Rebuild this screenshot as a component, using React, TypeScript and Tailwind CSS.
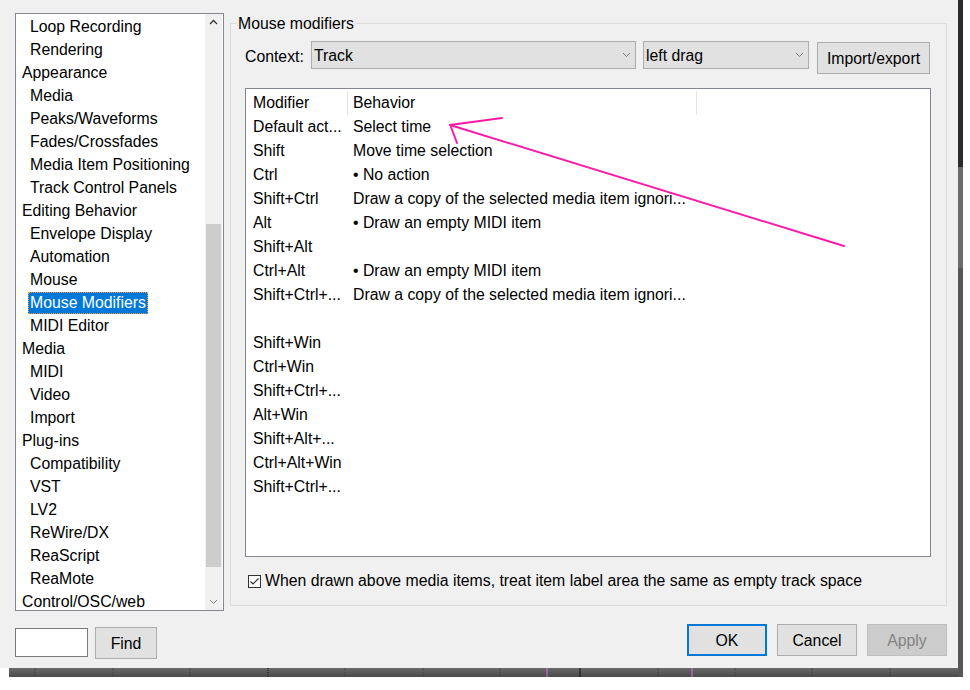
import React from 'react';

const treeItems: [string, boolean][] = [
  ['Loop Recording', true],
  ['Rendering', true],
  ['Appearance', false],
  ['Media', true],
  ['Peaks/Waveforms', true],
  ['Fades/Crossfades', true],
  ['Media Item Positioning', true],
  ['Track Control Panels', true],
  ['Editing Behavior', false],
  ['Envelope Display', true],
  ['Automation', true],
  ['Mouse', true],
  ['Mouse Modifiers', true],
  ['MIDI Editor', true],
  ['Media', false],
  ['MIDI', true],
  ['Video', true],
  ['Import', true],
  ['Plug-ins', false],
  ['Compatibility', true],
  ['VST', true],
  ['LV2', true],
  ['ReWire/DX', true],
  ['ReaScript', true],
  ['ReaMote', true],
  ['Control/OSC/web', false],
];

const rows: [string, string][] = [
  ['Default act...', 'Select time'],
  ['Shift', 'Move time selection'],
  ['Ctrl', '• No action'],
  ['Shift+Ctrl', 'Draw a copy of the selected media item ignori...'],
  ['Alt', '• Draw an empty MIDI item'],
  ['Shift+Alt', ''],
  ['Ctrl+Alt', '• Draw an empty MIDI item'],
  ['Shift+Ctrl+...', 'Draw a copy of the selected media item ignori...'],
  ['', ''],
  ['Shift+Win', ''],
  ['Ctrl+Win', ''],
  ['Shift+Ctrl+...', ''],
  ['Alt+Win', ''],
  ['Shift+Alt+...', ''],
  ['Ctrl+Alt+Win', ''],
  ['Shift+Ctrl+...', ''],
];

function Chevron({ color = '#7a7a7a' }: { color?: string }) {
  return (
    <svg width="9" height="6" viewBox="0 0 9 6">
      <path d="M1 1 L4.5 4.5 L8 1" fill="none" stroke={color} strokeWidth="1" />
    </svg>
  );
}

function Combo({ label, width }: { label: string; width: string }) {
  return (
    <div
      className={`${width} h-[28px] flex items-center justify-between bg-[#e1e1e1] border border-[#adadad] pl-[2px] pr-[4px]`}
    >
      <span className="pt-[2px]">{label}</span>
      <Chevron />
    </div>
  );
}

function TreePanel() {
  return (
    <div className="w-[209px] h-[598px] border border-[#828790] bg-white flex overflow-hidden">
      <div className="flex-1 pt-[1px]">
        {treeItems.map(([name, child], i) => (
          <div
            key={i}
            className={`h-[23px] leading-[23px] whitespace-nowrap ${child ? 'pl-[14px]' : 'pl-[6px]'}`}
          >
            {name === 'Mouse Modifiers' ? (
              <span className="inline-block -ml-[2px] px-[1px] leading-[20px] bg-[#0078d7] text-white border border-dotted border-[#e89a50]">
                {name}
              </span>
            ) : (
              name
            )}
          </div>
        ))}
      </div>
      <div className="w-[17px] mr-[1px] bg-[#f0f0f0] flex flex-col items-center">
        <div className="h-[17px] flex items-center justify-center">
          <svg width="9" height="6" viewBox="0 0 9 6">
            <path d="M1 5 L4.5 1.5 L8 5" fill="none" stroke="#333" strokeWidth="1.3" />
          </svg>
        </div>
        <div className="flex-1 w-full pt-[193px] pb-[27px] px-[1px] flex flex-col">
          <div className="h-[343px] bg-[#cdcdcd]" />
        </div>
        <div className="h-[17px] flex items-center justify-center">
          <Chevron color="#888" />
        </div>
      </div>
    </div>
  );
}

function ModifierTable() {
  return (
    <div className="w-[686px] h-[469px] mt-[14px] border border-[#828790] bg-white pt-[2px] px-[1px] overflow-hidden">
      <div className="flex h-[24px] leading-[24px]">
        <div className="w-[100px] pl-[6px]">Modifier</div>
        <div className="w-[1px] bg-[#e5e5e5]" />
        <div className="w-[348px] pl-[5px]">Behavior</div>
        <div className="w-[1px] bg-[#e5e5e5]" />
      </div>
      {rows.map(([mod, beh], i) => (
        <div key={i} className="flex h-[24px] leading-[24px] whitespace-nowrap">
          <div className="w-[101px] pl-[6px]">{mod}</div>
          <div className="pl-[5px]">{beh}</div>
        </div>
      ))}
    </div>
  );
}

function Btn({ children, variant = 'normal' }: { children: React.ReactNode; variant?: 'normal' | 'default' | 'disabled' }) {
  const cls =
    variant === 'default'
      ? 'border-2 border-[#0078d7] bg-[#e1e1e1]'
      : variant === 'disabled'
        ? 'border border-[#bfbfbf] bg-[#cccccc] text-[#838383]'
        : 'border border-[#adadad] bg-[#e1e1e1]';
  return <div className={`w-[80px] h-[32px] pt-[2px] flex items-center justify-center ${cls}`}>{children}</div>;
}

export default function App() {
  return (
    <div
      className="relative w-[970px] h-[690px] bg-white text-black text-[15.8px] overflow-hidden"
      style={{ fontFamily: '"Liberation Sans", Arial, sans-serif' }}
    >
      <div className="flex">
        <div className="w-[958px] h-[668px] bg-[#f0f0f0] pt-[13px] pl-[15px] pr-[11px] flex flex-col">
          <div className="flex gap-[6px]">
            <TreePanel />
            <div className="relative w-[717px] h-[583px] mt-[10px] border border-[#dcdcdc] pt-[17px] pl-[14px]">
              <div className="absolute -top-[9px] left-[6px] px-[1px] leading-[18px] bg-[#f0f0f0]">
                Mouse modifiers
              </div>
              <div className="flex items-start">
                <div className="h-[28px] leading-[28px] pt-[2px] w-[66px]">Context:</div>
                <Combo label="Track" width="w-[325px]" />
                <div className="w-[7px]" />
                <Combo label="left drag" width="w-[166px]" />
                <div className="mt-[1px] ml-[8px] w-[113px] h-[32px] pt-[2px] flex items-center justify-center border border-[#adadad] bg-[#e1e1e1]">
                  Import/export
                </div>
              </div>
              <ModifierTable />
              <div className="flex items-center mt-[17px] ml-[3px] h-[14px]">
                <div className="w-[13px] h-[13px] border border-[#333] bg-white flex items-center justify-center">
                  <svg width="11" height="11" viewBox="0 0 11 11">
                    <path d="M1.5 5.5 L4 8 L9.5 2.5" fill="none" stroke="#333" strokeWidth="1.2" />
                  </svg>
                </div>
                <span className="ml-[4px] whitespace-nowrap">
                  When drawn above media items, treat item label area the same as empty track space
                </span>
              </div>
            </div>
          </div>
          <div className="flex items-start mt-[13px]">
            <div className="w-[73px] h-[29px] mt-[4px] border border-[#7a7a7a] bg-white" />
            <div className="w-[62px] h-[32px] mt-[3px] ml-[7px] pt-[2px] flex items-center justify-center border border-[#adadad] bg-[#e1e1e1]">
              Find
            </div>
            <div className="flex-1 flex justify-end gap-[10px]">
              <Btn variant="default">OK</Btn>
              <Btn>Cancel</Btn>
              <Btn variant="disabled">Apply</Btn>
            </div>
          </div>
        </div>
        <div className="w-[5px] h-[677px] flex flex-col">
          <div className="h-[167px] bg-[#2b2b2b]" />
          <div className="h-[101px] bg-[#6b6b6b]" />
          <div className="flex-1 bg-[#575757]" />
        </div>
      </div>
      <div className="-mt-[9px] ml-[9px] w-[954px] h-[9px] bg-gradient-to-b from-[#6a6a6a] to-[#4a4a4a]">
        <svg width="954" height="9" viewBox="0 0 954 9">
          {[26, 104, 181, 336, 414, 491, 649, 726, 803, 881].map((x) => (
            <line key={x} x1={x} y1="0" x2={x} y2="9" stroke="#3a3a3a" strokeDasharray="1 1" />
          ))}
          <line x1="259" y1="0" x2="259" y2="9" stroke="#111" strokeDasharray="1 1" />
          <line x1="571" y1="0" x2="571" y2="9" stroke="#111" />
          <line x1="538" y1="0" x2="538" y2="9" stroke="#e070d0" />
          <line x1="683" y1="0" x2="683" y2="9" stroke="#e070d0" />
        </svg>
      </div>
      <svg className="absolute inset-0 pointer-events-none" width="970" height="690" viewBox="0 0 970 690">
        <g stroke="#fa1aa8" strokeWidth="2" fill="none" strokeLinecap="round">
          <line x1="844" y1="246" x2="450" y2="125" />
          <line x1="450" y1="125" x2="502" y2="118" />
          <line x1="451" y1="127" x2="457" y2="143" />
        </g>
      </svg>
    </div>
  );
}
